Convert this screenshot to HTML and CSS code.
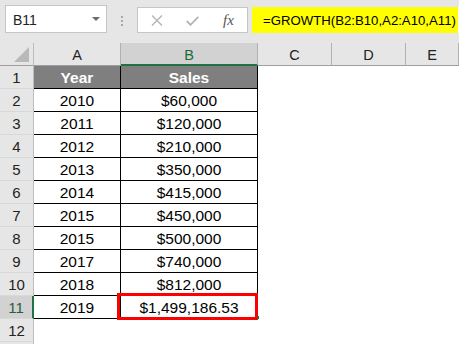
FILE: index.html
```html
<!DOCTYPE html>
<html>
<head lang="en">
    <meta charset="UTF-8">
    <title>GROWTH</title>
    <link rel="stylesheet" href="styles.css">
</head>
<body>
<div class="app">
    <div class="bar">
        <div class="namebox">
            <span>B11</span>
            <svg class="caret" width="8" height="4" viewBox="0 0 8 4"><path d="M0 0h8L4 4z" fill="#6b6b6b"/></svg>
        </div>
        <div class="grip"><i></i><i></i><i></i></div>
        <div class="fnbox">
            <svg width="12" height="11" viewBox="0 0 12 11"><path d="M1 .5l10 10M11 .5l-10 10" stroke="#b3b3b3" stroke-width="1.3" fill="none"/></svg>
            <svg width="13" height="10" viewBox="0 0 13 10"><path d="M.8 5l3.7 3.8L12.3.8" stroke="#b3b3b3" stroke-width="1.8" fill="none"/></svg>
            <span class="fx">fx</span>
        </div>
        <div class="formula"><span class="hl">=GROWTH(B2:B10,A2:A10,A11)</span></div>
    </div>

    <div class="sheet">
        <div class="corner"><svg width="15" height="15" viewBox="0 0 15 15"><path d="M15 0v15H0z" fill="#b9b9b9"/></svg></div>
        <div class="ch">A</div>
        <div class="ch sel">B</div>
        <div class="ch">C</div>
        <div class="ch">D</div>
        <div class="ch">E</div>

        <div class="rh">1</div><div class="t th">Year</div><div class="t th">Sales</div><div></div><div></div><div></div>
        <div class="rh">2</div><div class="t">2010</div><div class="t">$60,000</div><div></div><div></div><div></div>
        <div class="rh">3</div><div class="t">2011</div><div class="t">$120,000</div><div></div><div></div><div></div>
        <div class="rh">4</div><div class="t">2012</div><div class="t">$210,000</div><div></div><div></div><div></div>
        <div class="rh">5</div><div class="t">2013</div><div class="t">$350,000</div><div></div><div></div><div></div>
        <div class="rh">6</div><div class="t">2014</div><div class="t">$415,000</div><div></div><div></div><div></div>
        <div class="rh">7</div><div class="t">2015</div><div class="t">$450,000</div><div></div><div></div><div></div>
        <div class="rh">8</div><div class="t">2015</div><div class="t">$500,000</div><div></div><div></div><div></div>
        <div class="rh">9</div><div class="t">2017</div><div class="t">$740,000</div><div></div><div></div><div></div>
        <div class="rh">10</div><div class="t">2018</div><div class="t">$812,000</div><div></div><div></div><div></div>
        <div class="rh sel">11</div><div class="t">2019</div><div class="t active">$1,499,186.53</div><div></div><div></div><div></div>
        <div class="rh">12</div><div></div><div></div><div></div><div></div><div></div>
        <div class="rh"></div><div></div><div></div><div></div><div></div><div></div>
    </div>
</div>
</body>
</html>
```
FILE: styles.css
```css
html, body { margin: 0; padding: 0; }
body { background: #fff; font-family: "Liberation Sans", Arial, sans-serif; color: #000; }
.app { width: 459px; height: 344px; overflow: hidden; }

/* formula bar */
.bar { height: 43px; background: #e6e6e6; display: flex; align-items: flex-start; }
.namebox { box-sizing: border-box; width: 102px; height: 28px; margin: 5px 0 0 5px; background: #fff; border: 1px solid #c6c6c6; display: flex; align-items: center; justify-content: space-between; padding: 1px 6px 0 7px; font-size: 14px; color: #222; }
.namebox .caret { margin-top: -1px; }
.grip { width: 30px; height: 38px; display: flex; flex-direction: column; align-items: center; justify-content: center; gap: 2px; padding-top: 3px; box-sizing: border-box; }
.grip i { width: 2px; height: 2px; background: #a8a8a8; display: block; }
.fnbox { box-sizing: border-box; width: 111px; height: 26px; margin-top: 7px; background: #fff; border: 1px solid #c6c6c6; display: flex; align-items: center; padding: 1px 10px 0 13px; gap: 23px; }
.fnbox .fx { font-family: "Liberation Serif", serif; font-style: italic; font-size: 15px; color: #555; margin-left: 1px; }
.formula { flex: 1; height: 26px; margin: 7px 0 0 4px; background: #fff; display: flex; }
.formula .hl { background: #ffff00; padding: 4px 2px 0 11px; font-size: 13.2px; line-height: 20px; white-space: nowrap; }

/* sheet grid */
.sheet { display: grid; grid-template-columns: 34px 87px 137px 74px 74px 1fr; grid-auto-rows: 23px; }
.sheet > div { box-sizing: border-box; }
.corner { background: #e6e6e6; border-right: 1px solid #bdbdbd; border-bottom: 1px solid #9f9f9f; display: flex; align-items: flex-end; justify-content: flex-end; padding: 0 4px 3px 0; }
.ch { background: #e6e6e6; border-right: 1px solid #b1b1b1; border-bottom: 1px solid #9f9f9f; text-align: center; font-size: 14.5px; line-height: 22px; color: #222; padding-top: 1px; }
.ch.sel { background: #d2d2d2; border-bottom: 2px solid #217346; color: #1e6a40; }
.rh { background: #e6e6e6; border-right: 1px solid #bdbdbd; border-bottom: 1px solid #d8d8d8; text-align: center; font-size: 15px; line-height: 22px; color: #222; padding-top: 1px; }
.rh.sel { background: #d2d2d2; border-right: 2px solid #217346; color: #245f3e; }

.t { border-right: 1px solid #000; border-bottom: 1px solid #000; text-align: center; font-size: 15.5px; line-height: 22px; padding-top: 1px; white-space: nowrap; }
.th { background: #7f7f7f; color: #fff; font-weight: bold; }
.active { position: relative; }
.active::after { content: ""; position: absolute; top: -3px; left: -4px; right: -1px; bottom: -2px; border: 3px solid #ff0000; }
.active::before { content: ""; position: absolute; right: -2px; bottom: -1px; width: 2px; height: 3px; background: #217346; z-index: 1; }
```
